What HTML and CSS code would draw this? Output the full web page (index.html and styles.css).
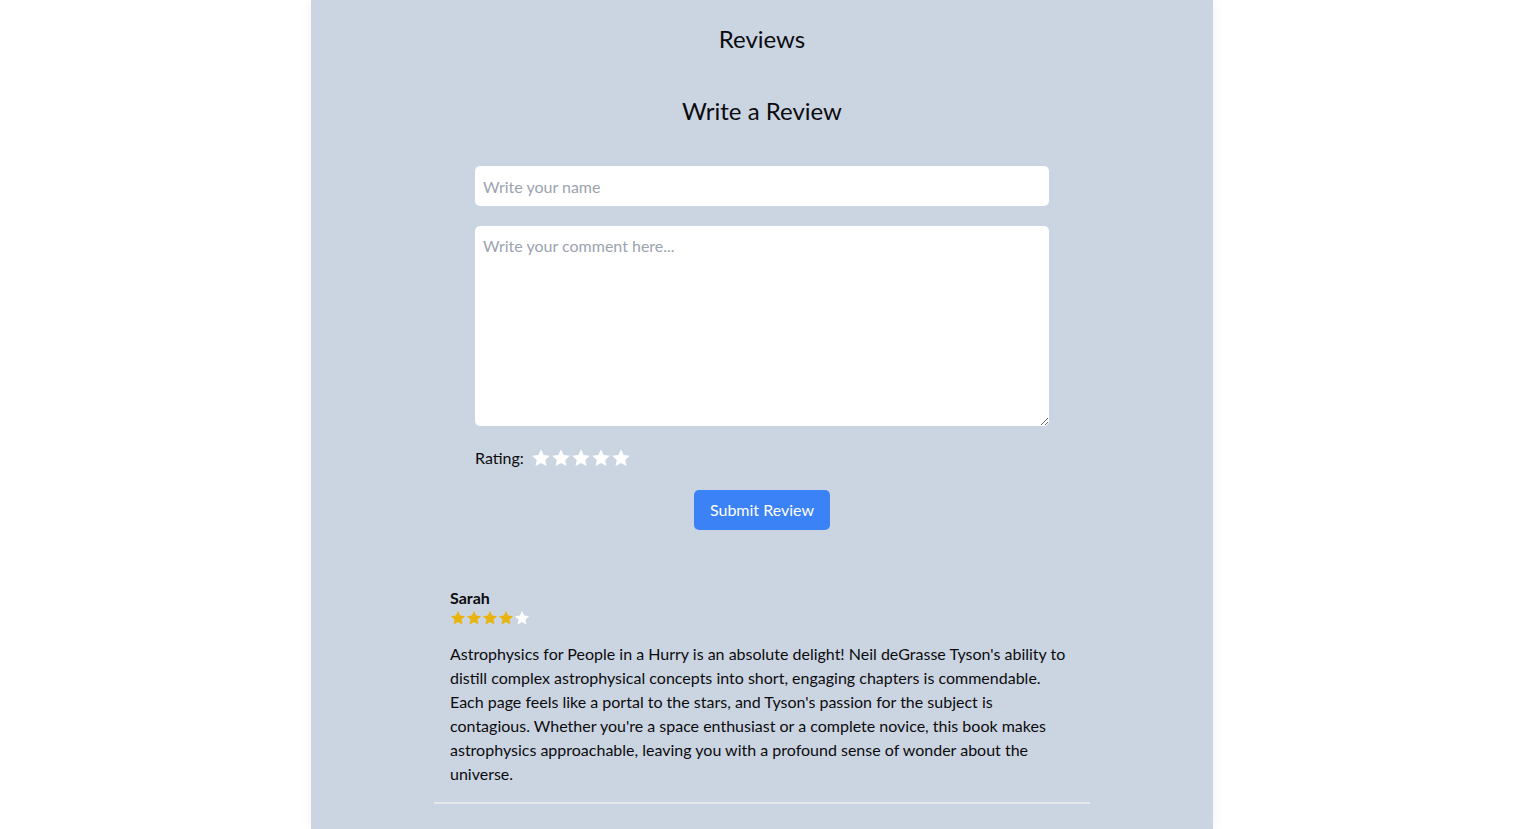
FILE: index.html
```html
<!DOCTYPE html>
<html lang="en">
<head>
<meta charset="utf-8">
<title>Reviews</title>
<link rel="stylesheet" href="styles.css">
</head>
<body>
<main class="panel">
  <h2 class="title">Reviews</h2>
  <section class="form-wrap">
    <h3 class="subtitle">Write a Review</h3>
    <form class="form">
      <input class="field" type="text" placeholder="Write your name">
      <textarea class="field area" placeholder="Write your comment here..."></textarea>
      <div class="rating">
        <span class="rating-label">Rating:</span>
        <div class="stars big">
          <svg viewBox="0 0 24 24"><path d="M12 1.5l3.2 6.9 7.4.8-5.5 5.1 1.5 7.4L12 17.9l-6.6 3.8 1.5-7.4L1.4 9.2l7.4-.8z"/></svg>
          <svg viewBox="0 0 24 24"><path d="M12 1.5l3.2 6.9 7.4.8-5.5 5.1 1.5 7.4L12 17.9l-6.6 3.8 1.5-7.4L1.4 9.2l7.4-.8z"/></svg>
          <svg viewBox="0 0 24 24"><path d="M12 1.5l3.2 6.9 7.4.8-5.5 5.1 1.5 7.4L12 17.9l-6.6 3.8 1.5-7.4L1.4 9.2l7.4-.8z"/></svg>
          <svg viewBox="0 0 24 24"><path d="M12 1.5l3.2 6.9 7.4.8-5.5 5.1 1.5 7.4L12 17.9l-6.6 3.8 1.5-7.4L1.4 9.2l7.4-.8z"/></svg>
          <svg viewBox="0 0 24 24"><path d="M12 1.5l3.2 6.9 7.4.8-5.5 5.1 1.5 7.4L12 17.9l-6.6 3.8 1.5-7.4L1.4 9.2l7.4-.8z"/></svg>
        </div>
      </div>
      <div class="actions">
        <button class="submit" type="button">Submit Review</button>
      </div>
    </form>
  </section>
  <article class="review">
    <div class="author">Sarah</div>
    <div class="stars small">
      <svg class="on" viewBox="0 0 24 24"><path d="M12 1.5l3.2 6.9 7.4.8-5.5 5.1 1.5 7.4L12 17.9l-6.6 3.8 1.5-7.4L1.4 9.2l7.4-.8z"/></svg>
      <svg class="on" viewBox="0 0 24 24"><path d="M12 1.5l3.2 6.9 7.4.8-5.5 5.1 1.5 7.4L12 17.9l-6.6 3.8 1.5-7.4L1.4 9.2l7.4-.8z"/></svg>
      <svg class="on" viewBox="0 0 24 24"><path d="M12 1.5l3.2 6.9 7.4.8-5.5 5.1 1.5 7.4L12 17.9l-6.6 3.8 1.5-7.4L1.4 9.2l7.4-.8z"/></svg>
      <svg class="on" viewBox="0 0 24 24"><path d="M12 1.5l3.2 6.9 7.4.8-5.5 5.1 1.5 7.4L12 17.9l-6.6 3.8 1.5-7.4L1.4 9.2l7.4-.8z"/></svg>
      <svg viewBox="0 0 24 24"><path d="M12 1.5l3.2 6.9 7.4.8-5.5 5.1 1.5 7.4L12 17.9l-6.6 3.8 1.5-7.4L1.4 9.2l7.4-.8z"/></svg>
    </div>
    <p class="comment">Astrophysics for People in a Hurry is an absolute delight! Neil deGrasse Tyson's ability to distill complex astrophysical concepts into short, engaging chapters is commendable. Each page feels like a portal to the stars, and Tyson's passion for the subject is contagious. Whether you're a space enthusiast or a complete novice, this book makes astrophysics approachable, leaving you with a profound sense of wonder about the universe.</p>
  </article>
</main>
</body>
</html>
```
FILE: styles.css
```css
* { box-sizing: border-box; }
html, body { margin: 0; padding: 0; background: #ffffff; }
body {
  font-family: Lato, "Noto Sans", sans-serif;
  color: #0b0b0f;
  font-size: 16px;
  line-height: 24px;
  padding-right: 3px;
}
.panel {
  width: 902px;
  min-height: 829px;
  margin: 0 auto;
  background: #cbd5e1;
  box-shadow: 0 0 12px rgba(0,0,0,0.06);
  padding-top: 23px;
  display: flex;
  flex-direction: column;
  align-items: center;
}
.title {
  margin: 0;
  font-size: 24px;
  line-height: 32px;
  font-weight: 400;
}
.form-wrap {
  margin-top: 40px;
  width: 574px;
  display: flex;
  flex-direction: column;
  align-items: center;
}
.subtitle {
  margin: 0;
  font-size: 24px;
  line-height: 32px;
  font-weight: 400;
}
.form {
  margin-top: 39px;
  width: 100%;
  display: flex;
  flex-direction: column;
  gap: 20px;
}
.field {
  width: 100%;
  height: 40px;
  border: none;
  border-radius: 5px;
  background: #ffffff;
  padding: 8px;
  font: inherit;
  color: #111827;
  outline: none;
}
.field::placeholder { color: #9ca3af; }
.area {
  height: 200px;
  resize: vertical;
  display: block;
}
.rating {
  display: flex;
  align-items: center;
  gap: 7px;
  height: 24px;
}
.stars { display: flex; }
.stars svg { display: block; fill: #ffffff; }
.stars.big svg { width: 20px; height: 20px; }
.stars.small svg { width: 16px; height: 16px; }
.stars svg.on { fill: #eab308; }
.actions { display: flex; justify-content: center; }
.submit {
  height: 40px;
  width: 136px;
  border: none;
  border-radius: 5px;
  background: #3b82f6;
  color: #ffffff;
  font: inherit;
  cursor: pointer;
}
.review {
  margin-top: 56px;
  width: 656px;
  padding: 0 16px 16px;
  border-bottom: 2px solid #e5e7eb;
}
.author {
  font-weight: 700;
  line-height: 24px;
}
.stars.small { height: 16px; align-items: center; }
.comment {
  margin: 16px 0 0;
  line-height: 24px;
}
```
